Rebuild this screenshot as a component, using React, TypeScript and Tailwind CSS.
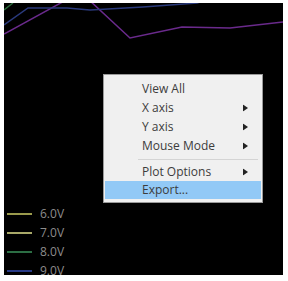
import React from "react";

const items = [
  { label: "View All", arrow: false, h: "h-[19px]" },
  { label: "X axis", arrow: true, h: "h-[19px]" },
  { label: "Y axis", arrow: true, h: "h-[19px]" },
  { label: "Mouse Mode", arrow: true, h: "h-[19px]" },
];

const legend = [
  { label: "6.0V", color: "bg-[#9a9a4c]" },
  { label: "7.0V", color: "bg-[#a8a868]" },
  { label: "8.0V", color: "bg-[#2c6e44]" },
  { label: "9.0V", color: "bg-[#283a86]" },
];

const Arrow: React.FC = () => (
  <svg width="5" height="7" viewBox="0 0 5 7" className="absolute left-[138px] top-1/2 -translate-y-1/2">
    <path d="M0 0L5 3.5L0 7Z" fill="#222" />
  </svg>
);

const Row: React.FC<{ label: string; arrow?: boolean; h: string; active?: boolean }> = ({
  label,
  arrow,
  h,
  active,
}) => (
  <div
    className={`relative flex items-center ${h} pl-[37px] ${active ? "bg-[#92c9f6]" : ""}`}
  >
    <span className="text-[12px] font-medium text-[#3c3c3c] leading-none">{label}</span>
    {arrow && <Arrow />}
  </div>
);

export default function App() {
  return (
    <div className="w-[288px] h-[281px] bg-white pt-[3px] pl-[4px]" style={{ fontFamily: '"Open Sans", "Noto Sans", sans-serif' }}>
      <div className="relative w-[279px] h-[272px] bg-black overflow-hidden">
        <svg width="279" height="272" className="absolute inset-0">
          <polyline points="0,31 64,-4 84,-4 126,35 178,24 226,25 279,19" fill="none" stroke="#6a2a8c" strokeWidth="1.5" />
          <polyline points="0,22 24,5 63,5 86,7 139,4 193,0 200,-2" fill="none" stroke="#2a3a7c" strokeWidth="1.5" />
          <polyline points="0,7 9,0" fill="none" stroke="#2a6a3a" strokeWidth="1.5" />
        </svg>

        <div className="absolute left-[99px] top-[71px] w-[160px] h-[129px] bg-[#f0f0f0] border border-[#9a9a9a] pt-[4px] px-[1px]">
          {items.map((it) => (
            <Row key={it.label} label={it.label} arrow={it.arrow} h={it.h} />
          ))}
          <div className="h-[8px] flex items-center pl-[33px] pr-[3px]">
            <div className="h-px w-full bg-[#d4d4d4]" />
          </div>
          <Row label="Plot Options" arrow h="h-[18px]" />
          <Row label="Export..." h="h-[18px]" active />
        </div>

        <div className="absolute left-[3px] top-[201px] flex flex-col">
          {legend.map((l) => (
            <div key={l.label} className="flex items-center h-[19px] gap-[8px]">
              <div className={`w-[25px] h-[2px] ${l.color}`} />
              <span className="text-[12px] font-medium text-[#8c8c8c] leading-none">{l.label}</span>
            </div>
          ))}
        </div>
      </div>
    </div>
  );
}
